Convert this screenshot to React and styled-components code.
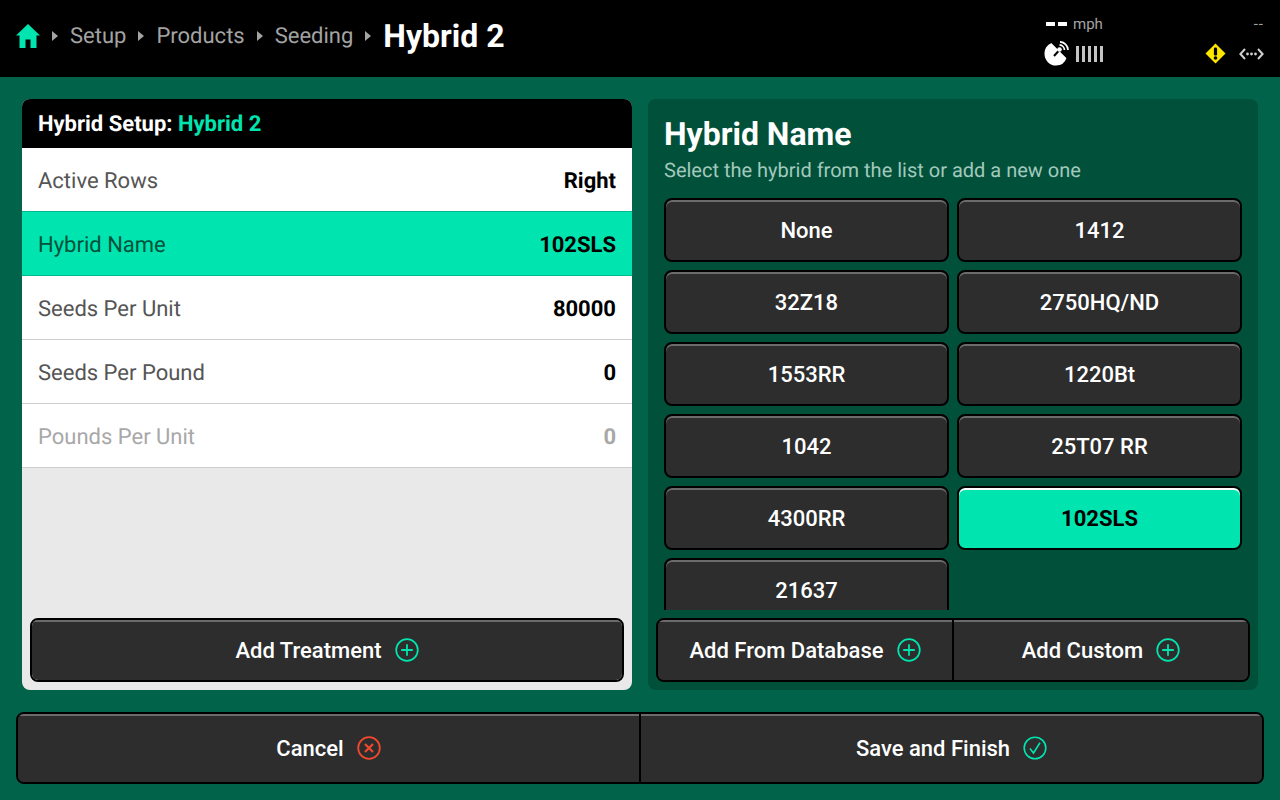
import React from 'react'
import styled, { createGlobalStyle } from 'styled-components'

const GlobalStyle = createGlobalStyle`
  html, body {
    margin: 0;
    padding: 0;
    background: #00634a;
    font-family: Roboto, "Liberation Sans", sans-serif;
    text-rendering: geometricPrecision;
  }
  * {
    box-sizing: border-box;
  }
`

const hybrids = ['None', '1412', '32Z18', '2750HQ/ND', '1553RR', '1220Bt', '1042', '25T07 RR', '4300RR', '102SLS', '21637']

const setupRows = [
  { label: 'Active Rows', value: 'Right' },
  { label: 'Hybrid Name', value: '102SLS', active: true },
  { label: 'Seeds Per Unit', value: '80000' },
  { label: 'Seeds Per Pound', value: '0' },
  { label: 'Pounds Per Unit', value: '0', disabled: true },
]

const Caret = () => (
  <CaretIcon width="6" height="12" viewBox="0 0 6 12">
    <path d="M0 1 L6 6 L0 11 Z" fill="#a3a3a3" />
  </CaretIcon>
)

const HomeIcon = () => (
  <svg width="24" height="24" viewBox="0 0 24 24">
    <path d="M12 0 L24 11.5 L20.5 11.5 L20.5 24 L14.5 24 L14.5 15.5 L9.5 15.5 L9.5 24 L3.5 24 L3.5 11.5 L0 11.5 Z" fill="#00e5b0" />
  </svg>
)

const PlusIcon = () => (
  <svg width="24" height="24" viewBox="0 0 24 24" fill="none" stroke="#00e5b0" strokeWidth="1.7">
    <circle cx="12" cy="12" r="10.8" />
    <path d="M12 6.2 V17.8 M6.2 12 H17.8" strokeWidth="1.8" />
  </svg>
)

const CancelIcon = () => (
  <svg width="24" height="24" viewBox="0 0 24 24" fill="none" stroke="#f0492e" strokeWidth="1.8">
    <circle cx="12" cy="12" r="10.8" />
    <path d="M8 8 L16 16 M16 8 L8 16" strokeWidth="2.2" />
  </svg>
)

const CheckIcon = () => (
  <svg width="24" height="24" viewBox="0 0 24 24" fill="none" stroke="#00e5b0" strokeWidth="1.6">
    <circle cx="12" cy="12" r="10.8" />
    <path d="M7 12.5 L10.5 17 L17 6.8" />
  </svg>
)

const SatelliteIcon = () => (
  <svg width="25" height="25" viewBox="0 0 25 25">
    <path d="M7.5 2 A11 11 0 0 0 0.5 13 A11.5 11.5 0 0 0 12 24.5 A11 11 0 0 0 22.5 17 Z" fill="#fff" />
    <path d="M7.5 2 L22.5 17 L24 12 L14 2 Z" fill="#000" />
    <path d="M10 15 L15 9.5" stroke="#000" strokeWidth="2" />
    <circle cx="15.5" cy="8.5" r="2.3" fill="#fff" />
    <path d="M15.5 3.8 A5.5 5.5 0 0 1 20.5 9 M16 0.8 A8.5 8.5 0 0 1 24 9" stroke="#fff" strokeWidth="1.7" fill="none" />
  </svg>
)

const WarningIcon = () => (
  <svg width="21" height="21" viewBox="0 0 21 21">
    <path d="M10.5 0.5 L20.5 10.5 L10.5 20.5 L0.5 10.5 Z" fill="#ffe600" />
    <rect x="8.9" y="4.6" width="3.2" height="8" rx="1.3" fill="#000" />
    <circle cx="10.5" cy="15" r="1.8" fill="#000" />
  </svg>
)

const LinkIcon = () => (
  <svg width="25" height="12" viewBox="0 0 25 12" fill="none" stroke="#d0d0d0" strokeWidth="2">
    <path d="M6 1 L1.4 6 L6 11 M19 1 L23.6 6 L19 11" />
    <circle cx="8.5" cy="6" r="1.4" fill="#d0d0d0" stroke="none" />
    <circle cx="12.5" cy="6" r="1.4" fill="#d0d0d0" stroke="none" />
    <circle cx="16.5" cy="6" r="1.4" fill="#d0d0d0" stroke="none" />
  </svg>
)

const App = () => (
  <>
    <GlobalStyle />
    <Page>
      <Header>
        <Crumbs>
          <HomeIcon />
          <Caret />
          <Crumb>Setup</Crumb>
          <Caret />
          <Crumb>Products</Crumb>
          <Caret />
          <Crumb>Seeding</Crumb>
          <Caret />
          <CurrentCrumb>Hybrid 2</CurrentCrumb>
        </Crumbs>
        <Status>
          <StatusLeft>
            <Speed>
              <SpeedDashes><i /><i /></SpeedDashes>
              <span>mph</span>
            </Speed>
            <Signal>
              <SatelliteIcon />
              <Bars>
                {[0, 1, 2, 3, 4].map((b) => <i key={b} />)}
              </Bars>
            </Signal>
          </StatusLeft>
          <StatusRight>
            <NoData>--</NoData>
            <Alerts>
              <WarningIcon />
              <LinkIcon />
            </Alerts>
          </StatusRight>
        </Status>
      </Header>

      <Main>
        <Columns>
          <SetupPanel>
            <SetupHead>
              Hybrid Setup: <em>Hybrid 2</em>
            </SetupHead>
            {setupRows.map((row) => (
              <Row key={row.label} $active={row.active} $disabled={row.disabled}>
                <span>{row.label}</span>
                <strong>{row.value}</strong>
              </Row>
            ))}
            <PanelFoot>
              <ActionGroup>
                <ActionButton>
                  Add Treatment
                  <PlusIcon />
                </ActionButton>
              </ActionGroup>
            </PanelFoot>
          </SetupPanel>

          <PickerPanel>
            <PickerTitle>Hybrid Name</PickerTitle>
            <PickerHint>Select the hybrid from the list or add a new one</PickerHint>
            <ListClip>
              <HybridGrid>
                {hybrids.map((h) => (
                  <HybridButton key={h} $selected={h === '102SLS'}>{h}</HybridButton>
                ))}
              </HybridGrid>
            </ListClip>
            <ActionGroup>
              <ActionButton>
                Add From Database
                <PlusIcon />
              </ActionButton>
              <ActionButton>
                Add Custom
                <PlusIcon />
              </ActionButton>
            </ActionGroup>
          </PickerPanel>
        </Columns>

        <BottomBar>
          <ActionButton>
            Cancel
            <CancelIcon />
          </ActionButton>
          <ActionButton>
            Save and Finish
            <CheckIcon />
          </ActionButton>
        </BottomBar>
      </Main>
    </Page>
  </>
)

const Page = styled.div`
  width: 1280px;
  height: 800px;
  overflow: hidden;
  display: flex;
  flex-direction: column;
  background: #00634a;
`

const Header = styled.header`
  height: 77px;
  flex: none;
  background: #000;
  display: flex;
  justify-content: space-between;
  padding: 0 16px;
`

const Crumbs = styled.nav`
  display: flex;
  align-items: center;
  height: 72px;
`

const CaretIcon = styled.svg`
  margin: 0 12px;
`

const Crumb = styled.span`
  color: #a3a3a3;
  font-size: 22px;
`

const CurrentCrumb = styled.span`
  color: #fff;
  font-size: 32px;
  font-weight: 700;
`

const Status = styled.div`
  display: flex;
  width: 220px;
  justify-content: space-between;
  padding-top: 14px;
`

const StatusLeft = styled.div`
  display: flex;
  flex-direction: column;
  gap: 7px;
`

const Speed = styled.div`
  display: flex;
  align-items: center;
  height: 20px;
  padding-left: 2px;
  gap: 6px;
  color: #a3a3a3;
  font-size: 15px;
`

const SpeedDashes = styled.span`
  display: flex;
  gap: 3px;
  i {
    width: 9px;
    height: 4px;
    background: #fff;
  }
`

const Signal = styled.div`
  display: flex;
  align-items: center;
  gap: 7px;
`

const Bars = styled.span`
  display: flex;
  gap: 3px;
  i {
    width: 3px;
    height: 16px;
    background: #c4c4c4;
  }
`

const StatusRight = styled.div`
  display: flex;
  flex-direction: column;
  align-items: flex-end;
  gap: 7px;
`

const NoData = styled.span`
  height: 20px;
  line-height: 20px;
  color: #a3a3a3;
  font-size: 15px;
  letter-spacing: 1px;
`

const Alerts = styled.div`
  display: flex;
  align-items: center;
  gap: 13px;
  height: 25px;
`

const Main = styled.main`
  flex: 1;
  display: flex;
  flex-direction: column;
  padding: 22px 16px 16px;
`

const Columns = styled.div`
  display: flex;
  gap: 16px;
  height: 591px;
  padding: 0 6px;
`

const SetupPanel = styled.section`
  width: 610px;
  border-radius: 8px;
  overflow: hidden;
  background: #e9e9e9;
  display: flex;
  flex-direction: column;
`

const SetupHead = styled.h2`
  margin: 0;
  height: 49px;
  flex: none;
  background: #000;
  color: #fff;
  font-size: 22px;
  font-weight: 700;
  line-height: 51px;
  padding: 0 16px;
  em {
    font-style: normal;
    color: #00e5b0;
  }
`

const Row = styled.div`
  height: 64px;
  flex: none;
  display: flex;
  align-items: center;
  justify-content: space-between;
  padding: 3px 16px 0;
  font-size: 22px;
  background: ${(p) => (p.$active ? '#00e5b0' : '#fff')};
  border-bottom: 1px solid ${(p) => (p.$active ? '#00b88d' : '#cfcfcf')};
  color: ${(p) => (p.$disabled ? '#a8a8a8' : p.$active ? '#00503a' : '#555')};
  ${(p) => p.$active && 'box-shadow: 0 -1px 0 #00b88d;'}
  strong {
    font-weight: 700;
    color: ${(p) => (p.$disabled ? '#a8a8a8' : '#000')};
  }
`

const PanelFoot = styled.div`
  margin-top: auto;
  padding: 0 8px 8px;
`

const PickerPanel = styled.section`
  width: 610px;
  border-radius: 8px;
  background: #00503a;
  display: flex;
  flex-direction: column;
  padding: 0 8px 8px;
`

const PickerTitle = styled.h2`
  margin: 0;
  padding: 16px 8px 0;
  color: #fff;
  font-size: 32px;
  font-weight: 700;
  line-height: 38px;
`

const PickerHint = styled.p`
  margin: 0;
  padding: 4px 8px 0;
  color: #a3c9bc;
  font-size: 20px;
  line-height: 26px;
`

const ListClip = styled.div`
  flex: 1;
  min-height: 0;
  overflow: hidden;
  margin: 15px 0 8px;
  padding: 0 8px;
`

const HybridGrid = styled.div`
  display: grid;
  grid-template-columns: 285px 285px;
  grid-auto-rows: 64px;
  gap: 8px;
`

const HybridButton = styled.button`
  border: 2px solid #000;
  border-radius: 8px;
  padding: 0;
  font-family: inherit;
  font-size: 22px;
  font-weight: ${(p) => (p.$selected ? 700 : 500)};
  color: ${(p) => (p.$selected ? '#000' : '#fff')};
  background: ${(p) => (p.$selected ? '#00e5b0' : '#2d2d2d')};
  box-shadow: inset 0 2px 0 ${(p) => (p.$selected ? '#fff' : '#6b6b6b')};
`

const ActionGroup = styled.div`
  display: flex;
  height: 64px;
  flex: none;
  border: 2px solid #000;
  border-radius: 8px;
  overflow: hidden;
  background: #2d2d2d;
`

const ActionButton = styled.button`
  flex: 1 1 0;
  display: flex;
  align-items: center;
  justify-content: center;
  gap: 13px;
  border: 0;
  padding: 0;
  font-family: inherit;
  font-size: 22px;
  font-weight: 500;
  color: #fff;
  background: #2d2d2d;
  box-shadow: inset 0 2px 0 #6b6b6b;
  & + & {
    border-left: 2px solid #000;
  }
`

const BottomBar = styled(ActionGroup)`
  height: 72px;
  margin-top: 22px;
`

export default App
